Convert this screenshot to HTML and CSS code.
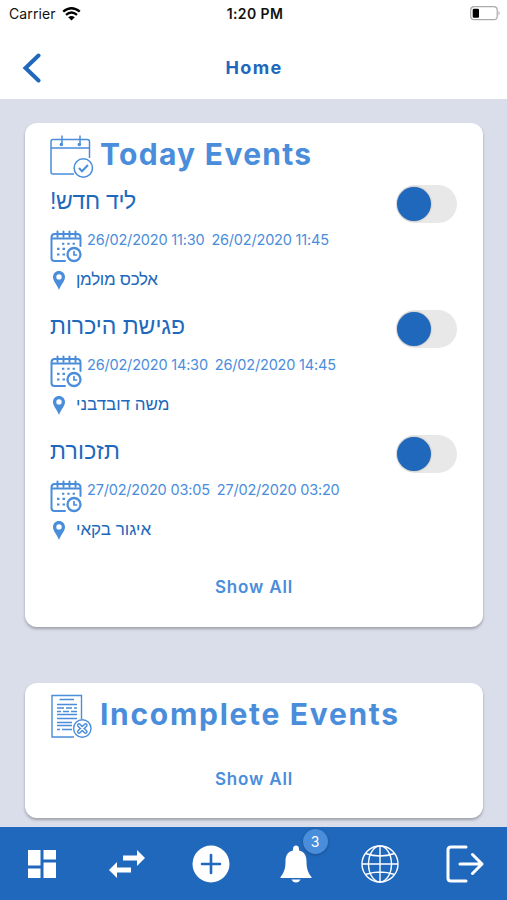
FILE: index.html
```
<!DOCTYPE html>
<html lang="en">
<head>
  <meta charset="UTF-8" />
  <meta name="viewport" content="width=device-width, initial-scale=1.0"/>
  <title>Home</title>
  <link rel="stylesheet" href="styles.css">
</head>
<body>
  <svg class="defs" aria-hidden="true">
    <symbol id="icon-calendar" viewBox="0 0 32 33">
      <g fill="none" stroke="currentColor" stroke-width="2" stroke-linecap="round">
        <path d="M15 31H4.500Q1.500 31 1.500 28V7.500Q1.500 4 4.500 4H27Q30.500 4 30.500 7.500V16"/>
        <path d="M2 8.500H30M7.500 1.500V6.500M13.500 1.500V6.500M19.500 1.500V6.500M25.500 1.500V6.500"/>
        <path d="M12 13.800H26" stroke-width="2" stroke-linecap="butt" stroke-dasharray="2.300 3"/>
        <path d="M7 18.800H15M7 24.500H15" stroke-width="2.200" stroke-linecap="butt" stroke-dasharray="2.500 3"/>
        <circle cx="24" cy="24.500" r="6.500" stroke-width="2.300"/>
        <path d="M24 21.500V25H26.500" stroke-width="1.700"/>
      </g>
    </symbol>
    <symbol id="icon-pin" viewBox="0 0 12 19">
      <path fill="currentColor" fill-rule="evenodd" d="M6 0C2.600 0 0 2.600 0 6C0 10 4 13.500 6 19C8 13.500 12 10 12 6C12 2.600 9.400 0 6 0ZM6 3.200A2.700 2.700 0 1 1 6 8.600A2.700 2.700 0 1 1 6 3.200Z"/>
    </symbol>
  </svg>

  <div class="status-bar">
    <div class="carrier">
      <span>Carrier</span>
      <svg width="19" height="14" viewBox="0 0 19 14">
        <path d="M1.200 4.700Q9.500 -2.200 17.800 4.700M4 7.900Q9.500 3.300 15 7.900" fill="none" stroke="#000" stroke-width="2.400"/>
        <path d="M6.200 10.200Q9.500 7.600 12.800 10.200L9.500 13.600Z"/>
      </svg>
    </div>
    <span class="time">1:20 PM</span>
    <svg class="battery" width="31" height="15" viewBox="0 0 31 15">
      <rect x=".7" y=".7" width="26.500" height="13" rx="3.500" fill="#fff" stroke="#aaa" stroke-width="1.200"/>
      <rect x="2.700" y="2.700" width="6.300" height="9" rx="1.300"/>
      <path d="M28.500 5Q31 7.200 28.500 9.500Z" fill="#aaa"/>
    </svg>
  </div>

  <header class="header">
    <svg class="back" width="20" height="30" viewBox="0 0 20 30">
      <path d="M17.500 2.500L4.500 15L17.500 27.500" fill="none" stroke="currentColor" stroke-width="4" stroke-linecap="round"/>
    </svg>
    <span class="header-title">Home</span>
  </header>

  <main class="content">
    <section class="card today">
      <div class="card-head">
        <svg width="44" height="45" viewBox="0 0 44 45" fill="none" stroke="currentColor" stroke-width="1.500">
          <path d="M24 40H3Q1 40 1 38V7.500Q1 5.500 3 5.500H37Q39.500 5.500 39.500 7.500V24M1 14H39.500"/>
          <path d="M12 2V11M30 2V11" stroke-linecap="round"/>
          <circle cx="11.300" cy="10.500" r="1"/>
          <circle cx="29.300" cy="10.500" r="1"/>
          <circle cx="33.300" cy="34" r="9.200"/>
          <path d="M29 34L32 37.300L38 31" stroke-width="2"/>
        </svg>
        <h2>Today Events</h2>
      </div>

      <div class="event">
        <div class="event-top">
          <span class="event-name name-1" dir="rtl" lang="he">ליד חדש!</span>
          <span class="toggle"></span>
        </div>
        <div class="event-when">
          <svg width="32" height="33"><use href="#icon-calendar"/></svg>
          <span class="start">26/02/2020 11:30</span>
          <span>26/02/2020 11:45</span>
        </div>
        <div class="event-who">
          <svg width="12" height="19"><use href="#icon-pin"/></svg>
          <span class="who-1" dir="rtl" lang="he">אלכס מולמן</span>
        </div>
      </div>

      <div class="event">
        <div class="event-top">
          <span class="event-name name-2" dir="rtl" lang="he">פגישת היכרות</span>
          <span class="toggle"></span>
        </div>
        <div class="event-when">
          <svg width="32" height="33"><use href="#icon-calendar"/></svg>
          <span class="start">26/02/2020 14:30</span>
          <span>26/02/2020 14:45</span>
        </div>
        <div class="event-who">
          <svg width="12" height="19"><use href="#icon-pin"/></svg>
          <span dir="rtl" lang="he">משה דובדבני</span>
        </div>
      </div>

      <div class="event">
        <div class="event-top">
          <span class="event-name name-3" dir="rtl" lang="he">תזכורת</span>
          <span class="toggle"></span>
        </div>
        <div class="event-when">
          <svg width="32" height="33"><use href="#icon-calendar"/></svg>
          <span class="start">27/02/2020 03:05</span>
          <span>27/02/2020 03:20</span>
        </div>
        <div class="event-who">
          <svg width="12" height="19"><use href="#icon-pin"/></svg>
          <span dir="rtl" lang="he">איגור בקאי</span>
        </div>
      </div>

      <a class="show-all">Show All</a>
    </section>

    <section class="card incomplete">
      <div class="card-head">
        <svg width="44" height="45" viewBox="0 0 44 45" fill="none" stroke="currentColor" stroke-width="1.400">
          <path d="M24 43H2V1.500H31.500V25"/>
          <path d="M9.500 5.500H24M7 10.500H27M7 20.500H27M7 24.500H27M7 28.500H22M7 31.500H22" stroke-width="1.300"/>
          <path d="M7 14H14M16 14H22M24 14H27M7 17.500H11M13 17.500H19M21 17.500H27M7 35.500H10M12 35.500H22" stroke-width="1.500"/>
          <circle cx="32.300" cy="34.500" r="8.700" fill="#fff"/>
          <path d="M29 31.200L35.600 37.800M35.600 31.200L29 37.800" stroke-width="4.200" stroke-linecap="round"/>
          <path d="M29 31.200L35.600 37.800M35.600 31.200L29 37.800" stroke="#fff" stroke-width="1.300" stroke-linecap="round"/>
        </svg>
        <h2>Incomplete Events</h2>
      </div>
      <a class="show-all">Show All</a>
    </section>
  </main>

  <nav class="tab-bar">
    <a class="tab">
      <svg width="30" height="30" viewBox="0 0 30 30" fill="#fff">
        <path d="M1 1H13.500V16.500H1ZM16.500 1H29V10.500H16.500ZM1 19.500H13.500V29H1ZM16.500 13.500H29V29H16.500Z"/>
      </svg>
    </a>
    <a class="tab">
      <svg width="38" height="30" viewBox="0 0 38 30" fill="#fff">
        <path d="M15 6.500H29V1L37 9L29 17V11.500H15ZM23 18.500H9V13L1 21L9 29V23.500H23Z"/>
      </svg>
    </a>
    <a class="tab">
      <svg width="38" height="38" viewBox="0 0 38 38">
        <circle cx="19" cy="19" r="18.500" fill="#fff"/>
        <path d="M19 10V28M10 19H28" stroke="#2068bc" stroke-width="2.600" stroke-linecap="round"/>
      </svg>
    </a>
    <a class="tab">
      <svg width="32" height="38" viewBox="0 0 32 38" fill="#fff">
        <path d="M16 0.500C14 0.500 13 2 13 4V5.500C8 6.500 5.500 10.500 5.500 16C5.500 23 4.500 27 .5 32V33H31.500V32C27.500 27 26.500 23 26.500 16C26.500 10.500 24 6.500 19 5.500V4C19 2 18 .5 16 .5ZM11.300 34.500H20.700Q19 37.500 16 37.500Q13 37.500 11.300 34.500Z"/>
      </svg>
      <span class="badge">3</span>
    </a>
    <a class="tab">
      <svg width="38" height="38" viewBox="0 0 38 38" fill="none" stroke="#fff" stroke-width="1.400">
        <circle cx="19" cy="19" r="18"/>
        <ellipse cx="19" cy="19" rx="11.500" ry="18"/>
        <path d="M19 1V37M1 19H37M4.500 8.500Q19 13.500 33.500 8.500M4.500 29.500Q19 24.500 33.500 29.500"/>
      </svg>
    </a>
    <a class="tab">
      <svg width="38" height="38" viewBox="0 0 38 38" fill="none" stroke="#fff" stroke-width="3" stroke-linecap="round" stroke-linejoin="round">
        <path d="M20 2H5Q2 2 2 5V33Q2 36 5 36H20M14 19H36M26.500 9.500L36 19L26.500 28.500"/>
      </svg>
    </a>
  </nav>
</body>
</html>
```
FILE: styles.css
```
* { margin: 0; padding: 0; box-sizing: border-box; }

body {
  font-family: Inter, "Liberation Sans", sans-serif;
  background-color: #dadeea;
  color: #4a8ddb;
  display: flex;
  flex-direction: column;
  height: 100vh;
  overflow: hidden;
}

.defs {
  display: none;
}

svg {
  flex-shrink: 0;
}

.status-bar {
  display: grid;
  grid-template-columns: 1fr auto 1fr;
  align-items: center;
  height: 28px;
  padding: 0 6px 1px 9px;
  background-color: #fff;
  color: #111;
  font-size: 14px;
}

.carrier {
  display: flex;
  align-items: center;
  gap: 6px;
  letter-spacing: 0.1px;
}

.time {
  font-weight: 600;
  font-size: 14px;
  letter-spacing: 0.4px;
}

.battery {
  justify-self: end;
}

.header {
  display: grid;
  grid-template-columns: 20px 1fr 20px;
  align-items: center;
  height: 71px;
  padding: 8px 20px 0 21px;
  background-color: #fff;
  color: #2068bc;
  flex-shrink: 0;
}

.header-title {
  text-align: center;
  font-size: 18px;
  font-weight: 700;
  letter-spacing: 1.3px;
}

.content {
  flex: 1;
  padding: 24px 24px 0 25px;
}

.card {
  display: flex;
  flex-direction: column;
  background-color: #fff;
  border-radius: 12px;
  padding: 0 25px;
  box-shadow: 0 2px 3px rgba(0, 0, 0, 0.28);
}

.today {
  height: 504px;
  margin-bottom: 56px;
}

.incomplete {
  height: 135px;
}

.card-head {
  display: flex;
  align-items: center;
  gap: 6px;
  height: 57px;
  padding-top: 10px;
}

.card-head h2 {
  font-size: 30px;
  line-height: 36px;
  font-weight: 700;
  letter-spacing: 1.3px;
  white-space: nowrap;
  margin-bottom: 5px;
}

.incomplete h2 {
  letter-spacing: 1.7px;
}

.event {
  height: 125px;
}

.event-top {
  display: flex;
  justify-content: space-between;
  align-items: center;
  height: 50px;
}

.event-name {
  font-family: "Liberation Sans", sans-serif;
  font-size: 23px;
  line-height: 42px;
  margin-bottom: 8px;
  color: #2068bc;
}

.name-1 {
  letter-spacing: -0.3px;
}

.name-3 {
  letter-spacing: 0.3px;
}

.toggle {
  width: 61px;
  height: 38px;
  border-radius: 19px;
  background-color: #e8e8e8;
  padding: 2px 1px;
  margin: 0 1px 2px 0;
}

.toggle::before {
  content: "";
  display: block;
  width: 34px;
  height: 34px;
  border-radius: 50%;
  background-color: #2068bc;
  box-shadow: 0 0 2px rgba(0, 0, 0, 0.3);
}

.event-when {
  display: flex;
  height: 32px;
  font-size: 14.5px;
  line-height: 20px;
  letter-spacing: -0.19px;
  white-space: nowrap;
}

.event-when .start {
  margin: 0 7px 0 5px;
}

.event-who {
  display: flex;
  align-items: center;
  gap: 11px;
  height: 36px;
  padding-left: 3px;
  font-family: "Liberation Sans", sans-serif;
  font-size: 17px;
  color: #2068bc;
}

.event-who svg {
  color: #4a8ddb;
}

.who-1 {
  letter-spacing: -0.3px;
}

.show-all {
  margin: auto;
  font-size: 17px;
  font-weight: 600;
  letter-spacing: 0.85px;
}

.today .show-all {
  margin-top: 22px;
}

.tab-bar {
  display: grid;
  grid-template-columns: repeat(6, 1fr);
  height: 73px;
  background-color: #2068bc;
  flex-shrink: 0;
}

.tab {
  position: relative;
  display: flex;
  justify-content: center;
  align-items: center;
}

.badge {
  position: absolute;
  top: 2px;
  left: 49px;
  width: 25px;
  height: 25px;
  border-radius: 50%;
  background-color: #4a8ddb;
  box-shadow: 0 1px 3px rgba(0, 0, 0, 0.25);
  color: #fff;
  font-size: 14px;
  line-height: 25px;
  text-align: center;
}
```
